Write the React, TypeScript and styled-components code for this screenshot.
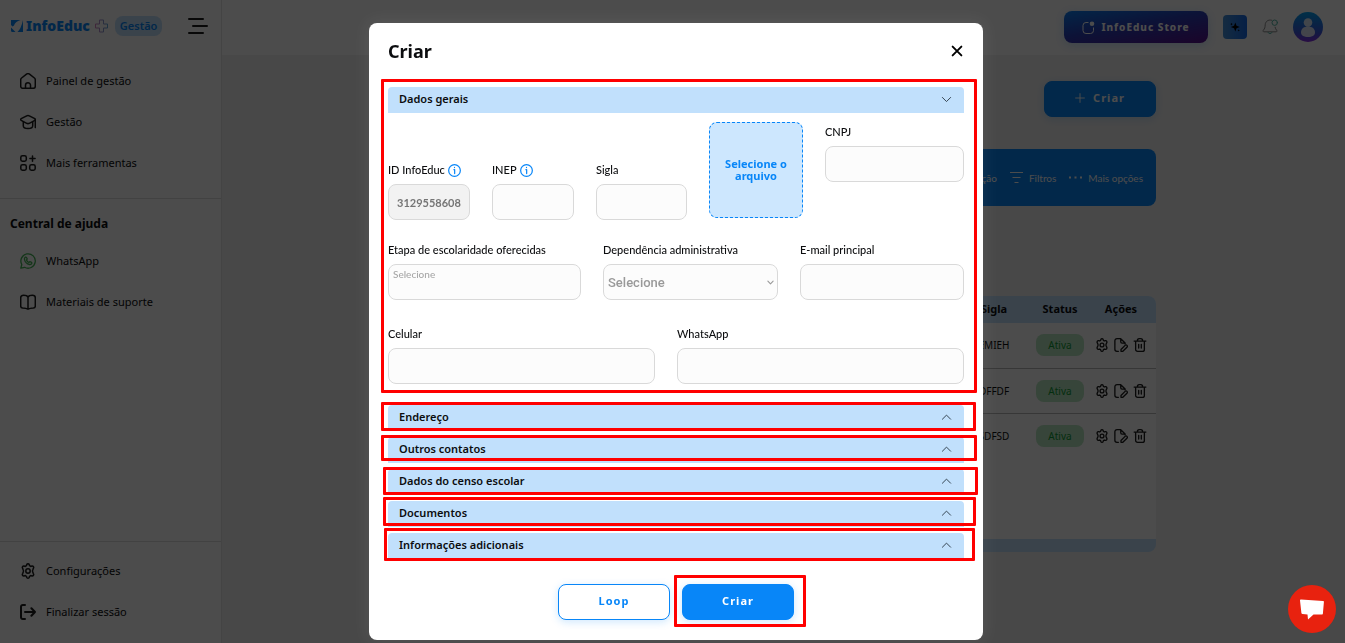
import React, { useState } from 'react';
import styled, { createGlobalStyle, css } from 'styled-components';

const blue = '#0886f8';
const paleBlue = '#c1e0fc';
const ink = '#0c0d0f';
const ui = '"Noto Sans", "Open Sans", sans-serif';
const form = 'Lato, "Noto Sans", sans-serif';

const GlobalStyle = createGlobalStyle`
  * { box-sizing: border-box; }
  body { margin: 0; background: #f1f1f1; color: ${ink}; font: 11px/16px ${ui}; }
  button, input, select { font: inherit; color: inherit; }
  button { cursor: pointer; }
  h1, h2, h3 { margin: 0; }
  svg { display: block; flex: none; }
`;

/* ---------- page shell ---------- */

const Page = styled.div`
  display: flex;
  min-height: 100vh;
`;

const Sidebar = styled.aside`
  display: flex;
  flex-direction: column;
  flex: none;
  width: 222px;
  padding-bottom: 11px;
  background: #fdfdfd;
  border-right: 1px solid #e4e4e4;
`;

const Brand = styled.div`
  display: flex;
  align-items: center;
  height: 52px;
  padding: 0 13px 0 10px;
`;

const BrandName = styled.span`
  margin: 0 5px 0 2px;
  color: ${blue};
  font-size: 14px;
  font-weight: 900;
`;

const BrandTag = styled.span`
  margin-left: 7px;
  padding: 2px 5px;
  border-radius: 8px;
  background: ${paleBlue};
  color: ${blue};
  font-weight: 600;
`;

const IconButton = styled.button`
  display: flex;
  padding: 0;
  border: 0;
  background: none;
`;

const MenuButton = styled(IconButton)`
  margin-left: auto;
`;

const NavList = styled.nav<{ $bottom?: boolean }>`
  display: flex;
  flex-direction: column;
  padding: 8px 0;
  ${(p) =>
    p.$bottom &&
    css`
      margin-top: auto;
      padding-bottom: 0;
      border-top: 1px solid #dedede;
    `}
`;

const NavLink = styled.a`
  display: flex;
  align-items: center;
  gap: 10px;
  height: 41px;
  padding-left: 20px;
  color: ${ink};
  text-decoration: none;
`;

const HelpTitle = styled.h2`
  padding: 16px 10px 0;
  border-top: 1px solid #dedede;
  margin-top: 7px;
  font-size: 12px;
  line-height: 18px;
  margin-bottom: -1px;
`;

const Main = styled.main`
  flex: 1;
  min-width: 0;
`;

const TopBar = styled.header`
  display: flex;
  align-items: center;
  justify-content: flex-end;
  gap: 15px;
  height: 55px;
  padding: 0 22px 1px 0;
  background: #fdfdfd;
`;

const StoreButton = styled.button`
  display: flex;
  align-items: center;
  justify-content: center;
  gap: 6px;
  width: 144px;
  height: 32px;
  padding: 0;
  border: 0;
  border-radius: 8px;
  background: linear-gradient(170deg, #0c7ef0 0%, #2a3fb8 45%, #5a0f8c 100%);
  box-shadow: 0 2px 8px #0886f833;
  color: #fff;
  font-size: 10px;
  font-weight: 800;
  letter-spacing: 1px;
`;

const SparkButton = styled.button`
  display: grid;
  place-items: center;
  width: 24px;
  height: 24px;
  padding: 0;
  border: 0;
  border-radius: 4px;
  background: linear-gradient(90deg, #4590d8, #1569e8);
`;

const Container = styled.div`
  display: flex;
  flex-direction: column;
  width: 745px;
  max-width: 100%;
  margin: 0 auto;
  padding-top: 26px;
`;

const ActionButton = styled.button<{ $outline?: boolean }>`
  display: flex;
  align-items: center;
  justify-content: center;
  gap: 8px;
  width: 112px;
  height: 36px;
  padding: 0 0 2px;
  border: 1px solid ${blue};
  border-radius: 8px;
  background: ${(p) => (p.$outline ? '#fff' : blue)};
  box-shadow: 0 2px 8px #0886f833;
  color: ${(p) => (p.$outline ? blue : '#fff')};
  font-size: 11px;
  font-weight: 700;
  letter-spacing: 1px;
`;

const CreateRow = styled.div`
  display: flex;
  justify-content: flex-end;
`;

const Toolbar = styled.div`
  display: flex;
  align-items: center;
  justify-content: flex-end;
  gap: 13px;
  height: 57px;
  margin-top: 32px;
  padding-right: 13px;
  border-radius: 8px;
  background: ${blue};
`;

const ToolButton = styled.button`
  display: flex;
  align-items: center;
  gap: 6px;
  padding: 0;
  border: 0;
  background: none;
  color: #fff;
  font: 10px/16px ${form};
`;

const TableCard = styled.div`
  display: flex;
  flex-direction: column;
  min-height: 256px;
  margin-top: 90px;
  border-bottom: 13px solid ${paleBlue};
  border-radius: 8px;
  overflow: hidden;
  background: #fdfdfd;
`;

const Table = styled.table`
  width: 100%;
  border-collapse: collapse;
  table-layout: fixed;
  text-align: center;
  th { height: 27px; padding: 0 0 2px; background: ${paleBlue}; font-size: 11px; font-weight: 700; }
  td { height: 45px; padding: 0; font: 10px/16px ${ui}; border-bottom: 1px solid #b8b8b8; }
  tr:last-child td { border-bottom: 0; }
`;

const StatusPill = styled.span`
  display: block;
  width: 48px;
  margin: 0 auto;
  padding: 3px 0;
  border-radius: 8px;
  background: #b8e6c1;
  color: #0f9a35;
`;

const RowActions = styled.div`
  display: flex;
  justify-content: center;
  gap: 5px;
`;

/* ---------- dialog ---------- */

const Backdrop = styled.div`
  position: fixed;
  inset: 0;
  display: flex;
  align-items: flex-start;
  justify-content: center;
  padding: 23px 0 3px 7px;
  background: rgba(0, 0, 0, 0.7);
`;

const Dialog = styled.section`
  position: relative;
  width: 614px;
  max-width: 100%;
  padding: 0 19px 20px;
  border-radius: 8px;
  background: #fff;
  box-shadow: 0 0 16px rgba(255, 255, 255, 0.08);
`;

const DialogHeader = styled.header`
  display: flex;
  align-items: center;
  justify-content: space-between;
  height: 56px;
  margin-bottom: 8px;
`;

const DialogTitle = styled.h1`
  font-size: 18px;
  line-height: 24px;
`;

const Sections = styled.div`
  display: flex;
  flex-direction: column;
  gap: 6px;
`;

const SectionToggle = styled.button`
  display: flex;
  align-items: center;
  justify-content: space-between;
  width: 100%;
  height: 26px;
  padding: 0 12px 2px 11px;
  border: 0;
  border-radius: 4px 4px 0 0;
  background: ${paleBlue};
  font-size: 11px;
  font-weight: 600;
`;

const SectionBody = styled.div`
  padding: 9px 0 15px;
`;

const FieldRow = styled.div<{ $columns: string; $below?: number }>`
  display: grid;
  grid-template-columns: ${(p) => p.$columns};
  gap: 22px;
  margin-bottom: ${(p) => p.$below ?? 0}px;
`;

const FieldBox = styled.div<{ $low?: boolean }>`
  display: flex;
  flex-direction: column;
  gap: 4px;
  min-width: 0;
  align-self: ${(p) => (p.$low ? 'end' : 'start')};
  font-family: ${form};
  font-size: 11px;
  font-weight: 500;
`;

const FieldLabel = styled.label`
  display: flex;
  align-items: center;
  gap: 3px;
  height: 20px;
  white-space: nowrap;
`;

const control = css`
  width: 100%;
  height: 36px;
  border: 1px solid #d9d9d9;
  border-radius: 8px;
  background: #fcfcfc;
  outline: none;
`;

const TextInput = styled.input`
  ${control}
  padding: 0 8px;
  &:disabled { background: #f2f2f2; color: #757575; font-weight: 700; }
`;

const TagInput = styled.input`
  ${control}
  padding: 0 4px 16px;
  font-size: 10px;
  &::placeholder { color: #a6a6a6; opacity: 1; }
`;

const SelectWrap = styled.div`
  display: grid;
  align-items: center;
  > * { grid-area: 1 / 1; }
  > svg { justify-self: end; margin-right: 4px; pointer-events: none; }
`;

const Select = styled.select`
  ${control}
  padding: 0 4px;
  appearance: none;
  color: #999;
  font: 500 13px Roboto, sans-serif;
`;

const FileDrop = styled.button`
  height: 96px;
  margin-bottom: 2px;
  padding: 0 8px;
  border: 1px dashed ${blue};
  border-radius: 8px;
  background: #cde7fe;
  color: ${blue};
  font-size: 11px;
  line-height: 12px;
  font-weight: 700;
`;

const DialogFooter = styled.footer`
  display: flex;
  justify-content: center;
  gap: 12px;
  margin-top: 25px;
`;

const Highlight = styled.div<{ $box: [number, number, number, number] }>`
  position: absolute;
  left: ${(p) => p.$box[0]}px;
  top: ${(p) => p.$box[1]}px;
  width: ${(p) => p.$box[2]}px;
  height: ${(p) => p.$box[3]}px;
  border: 3px solid #f00;
  border-radius: 1px;
  pointer-events: none;
`;

const ChatButton = styled.button`
  position: fixed;
  right: 9px;
  bottom: 10px;
  display: grid;
  place-items: center;
  width: 48px;
  height: 48px;
  padding: 0;
  border: 0;
  border-radius: 50%;
  background: #e8220f;
`;

/* ---------- icons ---------- */

type IconProps = { size?: number; children: React.ReactNode; color?: string; width?: number };
const Icon = ({ size = 16, children, color = '#1c1c1c', width = 1.5 }: IconProps) => (
  <svg width={size} height={size} viewBox="0 0 16 16" fill="none" stroke={color} strokeWidth={width} strokeLinecap="round" strokeLinejoin="round" aria-hidden="true">
    {children}
  </svg>
);

const HomeIcon = () => (
  <Icon>
    <path d="M.7 6.9c0-.8.3-1.400.9-1.900L6.500 1.200a2.400 2.400 0 0 1 3 0L14.400 5c.6.5.9 1.100.9 1.900v6.300a2.100 2.100 0 0 1-2.100 2.100H2.800A2.100 2.100 0 0 1 .7 13.200z" />
    <path d="M5.500 15.200v-3a2.500 2.500 0 0 1 5 0v3" />
  </Icon>
);
const CapIcon = () => (
  <Icon>
    <path d="M6.700 1.900 1.200 4.700c-.7.4-.7 1.300 0 1.700l5.500 2.900c.8.4 1.800.4 2.600 0l5.500-2.900c.7-.4.7-1.300 0-1.700L9.300 1.900a2.800 2.800 0 0 0-2.600 0z" />
    <path d="M3.300 7.800v4c0 1.600 2.100 2.800 4.700 2.800s4.700-1.200 4.700-2.800v-4M15.300 5.600v8" />
  </Icon>
);
const AppsIcon = () => (
  <Icon>
    <rect x=".8" y=".8" width="5.500" height="5.500" rx="1.700" />
    <rect x=".8" y="9.700" width="5.500" height="5.500" rx="1.700" />
    <rect x="9.700" y="9.700" width="5.500" height="5.500" rx="1.700" />
    <path d="M12.500 1v5.200M9.900 3.600h5.200" />
  </Icon>
);
const WhatsIcon = () => (
  <Icon color="#45b556" width={1.300}>
    <path d="M.8 15.200l1-3.700A7.200 7.200 0 1 1 4.600 14.300z" />
    <path d="M5.500 4.200c-.9.400-1.300 1.300-1 2.400.6 2.400 2.700 4.400 5 4.900 1.100.2 2-.3 2.300-1.200.1-.4 0-.7-.3-.9l-1.300-.7c-.3-.1-.6-.1-.8.200l-.5.6C7.800 9 6.900 8.100 6.500 7l.5-.6c.2-.2.2-.5.1-.8l-.6-1.100c-.2-.3-.6-.4-1-.3z" />
  </Icon>
);
const BookIcon = () => (
  <Icon>
    <path d="M8 3.100C7.400 1.900 6.100 1.200 3.600 1.200 1.700 1.200.7 2 .7 3.700v8.400c0 1.300.8 1.900 2 2 2 .1 3.700.3 5.300 1.100 1.600-.8 3.300-1 5.300-1.100 1.200-.1 2-.7 2-2V3.700c0-1.700-1-2.500-2.900-2.500-2.500 0-3.800.7-4.400 1.900zM8 3.100v12" />
  </Icon>
);
const GearIcon = ({ size }: { size?: number }) => (
  <Icon size={size}>
    <path d="M6.700 1.700c.4-1.200 2.200-1.200 2.600 0l.3 1 1.100.7 1.200-.3c1.300-.3 2.300 1.300 1.500 2.300L12.800 6.800c-.4.700-.4 1.700 0 2.400l.6 1.400c.8 1-.2 2.600-1.500 2.300l-1.200-.3-1.100.7-.3 1c-.4 1.200-2.200 1.200-2.600 0l-.3-1-1.100-.7-1.200.3c-1.300.3-2.300-1.300-1.500-2.300l.6-1.400c.4-.7.4-1.700 0-2.400l-.6-1.400c-.8-1 .2-2.600 1.500-2.300l1.200.3 1.100-.7z" />
    <circle cx="8" cy="8" r="2.200" />
  </Icon>
);
const ExitIcon = () => (
  <Icon width={2}>
    <path d="M5 1H2.800A1.800 1.800 0 0 0 1 2.800v10.400A1.800 1.800 0 0 0 2.800 15H5M5 8h10M11.400 4.200 15 8l-3.600 3.800" />
  </Icon>
);
const EditIcon = () => (
  <Icon size={14}>
    <path d="M5 15.200H3.400A2.400 2.400 0 0 1 1 12.800V3.200A2.400 2.400 0 0 1 3.400.8h4.300l5 5v1M7.700.8v3.500c0 .9.600 1.500 1.500 1.500h3.500" />
    <path d="M8 15.200v-2.100l4.700-4.700a1.400 1.400 0 0 1 2.100 2.100l-4.700 4.700z" />
  </Icon>
);
const TrashIcon = () => (
  <Icon size={14}>
    <path d="M1.300 3.500h13.400M3 3.500v9.500a2.200 2.200 0 0 0 2.200 2.200h5.600A2.200 2.200 0 0 0 13 13V3.500M5 3.300C5 1.500 5.800.8 7 .8h2c1.200 0 2 .7 2 2.500M6.500 7.200v4.300M9.500 7.200v4.300" />
  </Icon>
);
const InfoIcon = () => (
  <Icon size={13} color={blue}>
    <circle cx="8" cy="8" r="7.200" />
    <path d="M7.300 7h.9v4.800M8 4.100v.3" />
  </Icon>
);
const Chevron = ({ open }: { open: boolean }) => (
  <Icon size={11} width={1.400} color="#30404c">
    <path d={open ? 'M2 5l6 6 6-6' : 'M2 10.500l6-6 6 6'} />
  </Icon>
);

const LogoMark = () => (
  <svg width="14" height="14" viewBox="0 0 14 14" aria-hidden="true">
    <path d="M1 1h9.500Q5 2.500 4 6.500L2.500 7.500 1 6zM13 1v12H7.500Q11 10 13 1zM1 8.500 5.500 13H2.500A1.500 1.500 0 0 1 1 11.500z" fill={blue} />
  </svg>
);
const LogoPlus = () => (
  <svg width="13" height="14" viewBox="0 0 13 14" aria-hidden="true">
    <defs>
      <linearGradient id="plus" x1="0" x2="1">
        <stop stopColor="#d67fc4" />
        <stop offset="1" stopColor="#68a8d8" />
      </linearGradient>
    </defs>
    <path d="M4.500 1h4v4h4v4h-4v4h-4V9h-4V5h4z" fill="none" stroke="url(#plus)" strokeLinejoin="round" />
  </svg>
);
const AvatarIcon = () => (
  <svg width="30" height="30" viewBox="0 0 30 30" aria-hidden="true">
    <defs>
      <linearGradient id="avatar" x1="0" x2="0" y1="0" y2="1">
        <stop stopColor="#00a0f0" />
        <stop offset=".7" stopColor="#3c55dc" />
        <stop offset="1" stopColor="#8a2be2" />
      </linearGradient>
    </defs>
    <circle cx="15" cy="15" r="15" fill="url(#avatar)" />
    <circle cx="15" cy="10.500" r="4.300" fill="#fff" opacity=".85" />
    <path d="M8 20.500c0-4 3-6 7-6s7 2 7 6c0 3-3 4.500-7 4.500s-7-1.500-7-4.500z" fill="#fff" opacity=".85" />
  </svg>
);

/* ---------- parts ---------- */

type FieldProps = { id: string; label: string; info?: boolean; low?: boolean; children?: React.ReactNode };
const Field = ({ id, label, info, low, children }: FieldProps) => (
  <FieldBox $low={low}>
    <FieldLabel htmlFor={id}>
      {label}
      {info && <InfoIcon />}
    </FieldLabel>
    {children ?? <TextInput id={id} />}
  </FieldBox>
);

const GeneralForm = () => (
  <SectionBody>
    <FieldRow $columns="82fr 82fr 91fr 94fr 139fr" $below={20}>
      <Field id="infoeduc" label="ID InfoEduc" info low>
        <TextInput id="infoeduc" value="3129558608" disabled readOnly />
      </Field>
      <Field id="inep" label="INEP" info low />
      <Field id="sigla" label="Sigla" low />
      <FileDrop type="button">Selecione o arquivo</FileDrop>
      <Field id="cnpj" label="CNPJ" />
    </FieldRow>
    <FieldRow $columns="193fr 175fr 164fr" $below={24}>
      <Field id="etapa" label="Etapa de escolaridade oferecidas">
        <TagInput id="etapa" placeholder="Selecione" />
      </Field>
      <Field id="dependencia" label="Dependência administrativa">
        <SelectWrap>
          <Select id="dependencia">
            <option>Selecione</option>
          </Select>
          <Icon size={7} width={2.500} color="#999">
            <path d="M2 5l6 6 6-6" />
          </Icon>
        </SelectWrap>
      </Field>
      <Field id="email" label="E-mail principal" />
    </FieldRow>
    <FieldRow $columns="267fr 287fr">
      <Field id="celular" label="Celular" />
      <Field id="whatsapp" label="WhatsApp" />
    </FieldRow>
  </SectionBody>
);

const sectionTitles = ['Dados gerais', 'Endereço', 'Outros contatos', 'Dados do censo escolar', 'Documentos', 'Informações adicionais'];

const highlights: [number, number, number, number][] = [
  [12, 56, 596, 314],
  [12, 379, 595, 29],
  [12, 412, 596, 26],
  [14, 444, 595, 28],
  [14, 474, 593, 29],
  [15, 505, 591, 33],
  [305, 552, 132, 52],
];

const schools = ['EMIEH', 'DFFDF', 'SDFSD'];

export default function App() {
  const [open, setOpen] = useState(0);
  return (
    <>
      <GlobalStyle />
      <Page>
        <Sidebar>
          <Brand>
            <LogoMark />
            <BrandName>InfoEduc</BrandName>
            <LogoPlus />
            <BrandTag>Gestão</BrandTag>
            <MenuButton aria-label="Menu">
              <svg width="20" height="16" viewBox="0 0 20 16" stroke="#1c1c1c" strokeWidth="2" strokeLinecap="round" aria-hidden="true">
                <path d="M1 1h14M5 8h14M1 15h14" />
              </svg>
            </MenuButton>
          </Brand>
          <NavList>
            <NavLink href="#painel"><HomeIcon />Painel de gestão</NavLink>
            <NavLink href="#gestao"><CapIcon />Gestão</NavLink>
            <NavLink href="#ferramentas"><AppsIcon />Mais ferramentas</NavLink>
          </NavList>
          <HelpTitle>Central de ajuda</HelpTitle>
          <NavList>
            <NavLink href="#whatsapp"><WhatsIcon />WhatsApp</NavLink>
            <NavLink href="#materiais"><BookIcon />Materiais de suporte</NavLink>
          </NavList>
          <NavList $bottom>
            <NavLink href="#config"><GearIcon />Configurações</NavLink>
            <NavLink href="#sair"><ExitIcon />Finalizar sessão</NavLink>
          </NavList>
        </Sidebar>
        <Main>
          <TopBar>
            <StoreButton>
              <svg width="13" height="13" viewBox="0 0 13 13" fill="none" stroke="#fff" aria-hidden="true">
                <path d="M6.500 1.500H4a3 3 0 0 0-3 3v5a3 3 0 0 0 3 3h4.500a3 3 0 0 0 3-3V6.500" />
                <circle cx="10" cy="2.700" r="2.300" fill="#fff" stroke="none" />
              </svg>
              InfoEduc Store
            </StoreButton>
            <SparkButton aria-label="Assistente">
              <svg width="10" height="10" viewBox="0 0 10 10" aria-hidden="true">
                <path d="M5.300.5 6.500 3.800 9.800 5 6.500 6.200 5.300 9.500 4.100 6.200.8 5 4.100 3.800zM1.500.8l.4 1 .9.300-.9.400-.4.900-.4-.9L.2 2.100l.9-.3zM8.700 7.300l.3.800.8.300-.8.300-.3.800-.3-.8-.8-.3.800-.3z" fill="#000" />
              </svg>
            </SparkButton>
            <IconButton aria-label="Notificações">
              <Icon color="#8c8c8c" width={1}>
                <path d="M9.500 1.200C6 .4 3.400 2.500 3.200 5.800c-.1 2.700-.5 3.800-1.800 5.400-.7.800-.4 1.600.6 1.600h12c1 0 1.300-.8.600-1.600-.8-1-1.300-1.900-1.500-3" />
                <path d="M6 13.500c.5 1.500 3.500 1.500 4 0" stroke="#53b5a5" />
                <circle cx="12.700" cy="3.700" r="2.700" stroke="#53b5a5" />
              </Icon>
            </IconButton>
            <IconButton aria-label="Perfil"><AvatarIcon /></IconButton>
          </TopBar>
          <Container>
            <CreateRow>
              <ActionButton>
                <Icon size={10} color="#fff"><path d="M8 1v14M1 8h14" /></Icon>
                Criar
              </ActionButton>
            </CreateRow>
            <Toolbar>
              <ToolButton>Ação</ToolButton>
              <ToolButton>
                <svg width="13" height="12" viewBox="0 0 13 12" stroke="#fff" aria-hidden="true">
                  <path d="M0 .5h13M2.500 5.500h8M4.500 10.500h4" />
                </svg>
                Filtros
              </ToolButton>
              <ToolButton>
                <svg width="13" height="3" viewBox="0 0 13 3" fill="#fff" aria-hidden="true">
                  <path d="M0 .5h2v2H0zM5.500.5h2v2h-2zM11 .5h2v2h-2z" />
                </svg>
                Mais opções
              </ToolButton>
            </Toolbar>
            <TableCard>
              <Table>
                <colgroup>
                  <col />
                  <col width="80" />
                  <col width="52" />
                  <col width="70" />
                </colgroup>
                <thead>
                  <tr>
                    <th />
                    <th scope="col">Sigla</th>
                    <th scope="col">Status</th>
                    <th scope="col">Ações</th>
                  </tr>
                </thead>
                <tbody>
                  {schools.map((s) => (
                    <tr key={s}>
                      <td />
                      <td>{s}</td>
                      <td><StatusPill>Ativa</StatusPill></td>
                      <td>
                        <RowActions>
                          <IconButton aria-label="Configurar"><GearIcon size={14} /></IconButton>
                          <IconButton aria-label="Editar"><EditIcon /></IconButton>
                          <IconButton aria-label="Excluir"><TrashIcon /></IconButton>
                        </RowActions>
                      </td>
                    </tr>
                  ))}
                </tbody>
              </Table>
            </TableCard>
          </Container>
        </Main>
      </Page>

      <Backdrop>
        <Dialog role="dialog" aria-modal="true" aria-labelledby="dialog-title">
          <DialogHeader>
            <DialogTitle id="dialog-title">Criar</DialogTitle>
            <IconButton aria-label="Fechar">
              <Icon size={14} width={2.200} color="#000"><path d="M3 3l10 10M13 3L3 13" /></Icon>
            </IconButton>
          </DialogHeader>
          <Sections>
            {sectionTitles.map((title, i) => (
              <div key={title}>
                <h3>
                  <SectionToggle type="button" aria-expanded={open === i} onClick={() => setOpen(open === i ? -1 : i)}>
                    {title}
                    <Chevron open={open === i} />
                  </SectionToggle>
                </h3>
                {i === 0 && open === 0 && <GeneralForm />}
              </div>
            ))}
          </Sections>
          <DialogFooter>
            <ActionButton $outline type="button">Loop</ActionButton>
            <ActionButton type="submit">Criar</ActionButton>
          </DialogFooter>
          {highlights.map((box, i) => (
            <Highlight key={i} $box={box} />
          ))}
        </Dialog>
      </Backdrop>

      <ChatButton aria-label="Chat">
        <svg width="24" height="22" viewBox="0 0 24 22" fill="#fff" aria-hidden="true">
          <path d="M1 1.500 23 3c.6 0 1 .5.900 1l-1 11.500c0 .6-.5 1-1 1H13.500L8 21.500l-.5-5-5-.4c-.6 0-1-.4-1.100-1L0 2.500c0-.6.400-1 1-1z" />
        </svg>
      </ChatButton>
    </>
  );
}
